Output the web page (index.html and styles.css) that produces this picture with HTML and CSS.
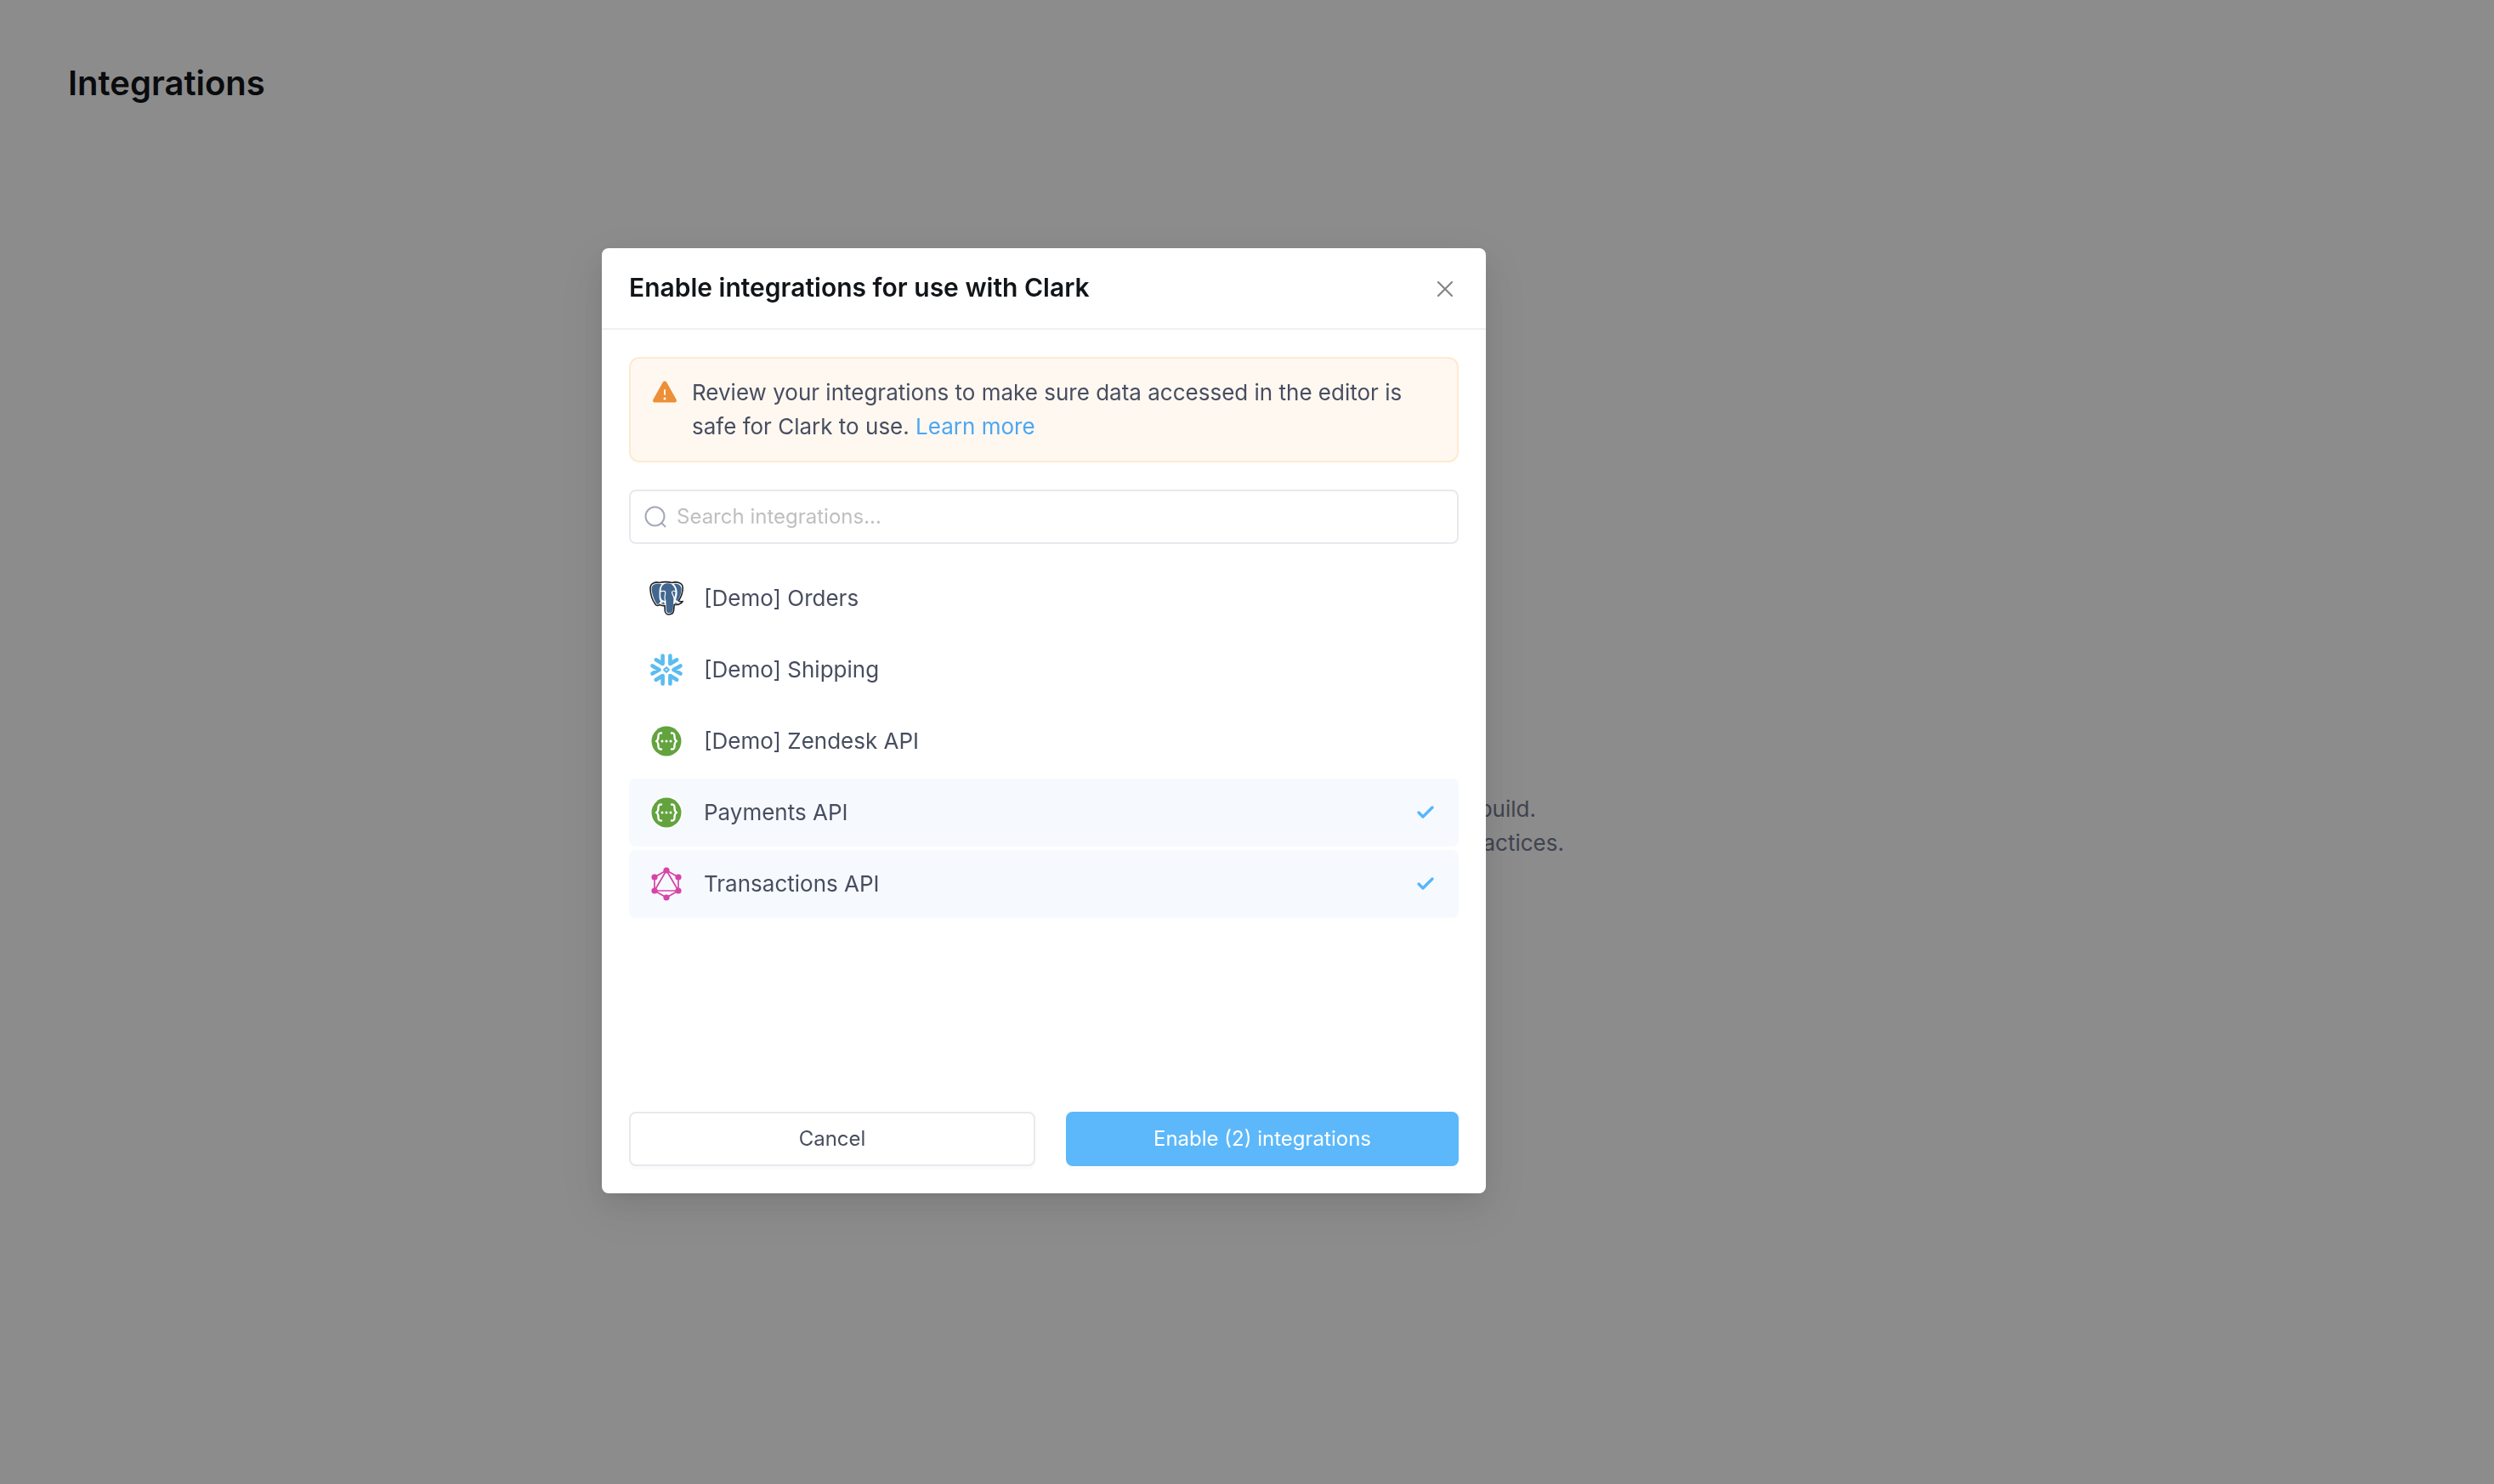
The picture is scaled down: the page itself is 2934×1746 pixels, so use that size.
FILE: index.html
```html
<!DOCTYPE html>
<html lang="en">
<head>
    <meta charset="UTF-8">
    <meta name="viewport" content="width=device-width, initial-scale=1.0">
    <title>Integrations</title>
    <link rel="stylesheet" href="styles.css">
</head>
<body>
    <main class="page">
        <h1>Integrations</h1>
        <p class="empty-state">
            <span class="line line-short">build.</span>
            <span class="line line-long">practices.</span>
        </p>
    </main>

    <div class="overlay">
        <div class="modal" role="dialog" aria-modal="true" aria-labelledby="modalTitle">
            <header class="modal-header">
                <h2 id="modalTitle">Enable integrations for use with Clark</h2>
                <button type="button" class="close" aria-label="Close">
                    <svg width="20" height="20" viewBox="0 0 20 20" fill="none" stroke="#858585" stroke-width="2.2" stroke-linecap="round">
                        <path d="M2 2l16 16M18 2L2 18"/>
                    </svg>
                </button>
            </header>

            <form class="modal-body">
                <div class="alert">
                    <svg class="alert-icon" width="28" height="28" viewBox="0 0 28 28">
                        <path d="M14 1.500c1 0 1.900.500 2.400 1.400l11.200 20c.900 1.700 0 3.600-1.900 3.600H2.300c-1.900 0-2.800-1.900-1.900-3.600l11.200-20C12.100 2 13 1.500 14 1.500z" fill="#ed8f37"/>
                        <path d="M14 12v5" stroke="#fff8f1" stroke-width="2" stroke-linecap="round"/>
                        <circle cx="14" cy="22" r="1.500" fill="#fff8f1"/>
                    </svg>
                    <p>Review your integrations to make sure data accessed in the editor is safe for Clark to use. <a href="#learn-more">Learn more</a></p>
                </div>

                <div class="search">
                    <svg width="26" height="26" viewBox="0 0 26 26" fill="none" stroke="#a4a9b8" stroke-width="2" stroke-linecap="round">
                        <circle cx="12.500" cy="12.500" r="11"/>
                        <path d="M20.500 20.500l4 4"/>
                    </svg>
                    <input type="text" aria-label="Search integrations" placeholder="Search integrations...">
                </div>

                <ul class="integrations">
                    <li>
                        <button type="button" class="integration">
                            <svg class="logo" viewBox="0 0 40 40" stroke-linejoin="round" stroke-linecap="round">
                                <path d="M12 1.500C6 0 .5 3 1 9c.3 6 3 14 6 18 1.500 2 3.500 2 5 .3 1.500 1.200 3.500 1.500 6 1.200l.3 6.500c.5 3.500 3 4.300 5.700 3.800 3-.5 4.300-2.300 4.600-5l.6-6.500c3.500.8 8-.5 10-3.800-2 .4-4 .2-5-.7 3-4 5.500-11 5-16C38.500 1.500 32 0 26.500 1.500 22 .5 16 .5 12 1.500z" fill="#fff" stroke="#222" stroke-width="1.600"/>
                                <g fill="#41678f">
                                    <path d="M12 3C7 1.800 2.300 4 2.600 9c.3 5 2.800 13 5.500 17 1 1.300 2 1.300 3 .2l2-2.700c-1.500-2-1.600-4-1.500-7 .2-5-.8-9 3-13z"/>
                                    <path d="M28.500 2.800C33 2 37.200 4 37.600 8.500c.3 5-2 11-5 14.700-1.200-.8-1.500-1.500-1.300-2.700 2-5 2.400-12-2.800-17.700z"/>
                                    <path d="M14 8c1-4 4-5.700 8-5.700 5 0 8.500 5 8.500 10 0 5.700-2.200 7-2.300 12.700l-.5 8c-.3 2.800-1.300 4-3.800 4.300-2.300.3-3.800-.7-4.100-3.300-.3-3.500 0-6.500-.5-11-3 0-5.300-1-5.800-3.500C13 16 13 12 14 8z"/>
                                    <path d="M13.500 25.800l3.500-1.500 1 2.500c-1.500.3-3.200 0-4.500-1zM30 25l1.500.2 3 .8c-1.500.7-3 .8-4.500.6z"/>
                                </g>
                                <path d="M13 12c2-1 5-.8 5.500 0 .6 3-.4 5-.5 7.500 0 1.500 1 2.500.7 4.500M31 12c-2-1-4-.5-4.500.5 0 3 2.500 5 2.500 8" fill="none" stroke="#fff" stroke-width="1.200"/>
                            </svg>
                            <span class="name">[Demo] Orders</span>
                        </button>
                    </li>
                    <li>
                        <button type="button" class="integration">
                            <svg class="logo" viewBox="0 0 40 40" fill="none" stroke="#5bbcf0" stroke-width="4.600" stroke-linecap="round" stroke-linejoin="round">
                                <path d="M15.600 3.500V13L7.800 8.300M24.400 3.500V13l7.800-4.700"/>
                                <path d="M15.600 36.500V27l-7.800 4.700M24.400 36.500V27l7.800 4.700"/>
                                <path d="M3.500 15.500l8 4.500-8 4.500M36.500 15.500l-8 4.500 8 4.500"/>
                                <path d="M20 17.200l2.800 2.800-2.800 2.800-2.800-2.800z" stroke-width="2.200"/>
                            </svg>
                            <span class="name">[Demo] Shipping</span>
                        </button>
                    </li>
                    <li>
                        <button type="button" class="integration">
                            <svg class="logo" viewBox="0 0 40 40">
                                <circle cx="20" cy="20" r="19.500" fill="#fff"/>
                                <circle cx="20" cy="20" r="17.500" fill="#62a33e"/>
                                <g fill="none" stroke="#fff" stroke-width="2.400" stroke-linecap="round" stroke-linejoin="round">
                                    <path d="M14 10.500c-3 0-3.500 1-3.500 3.500 0 3.500-.200 5-2.500 6 2.300 1 2.500 2.500 2.500 6 0 2.500.500 3.500 3.500 3.500"/>
                                    <path d="M26 10.500c3 0 3.500 1 3.500 3.500 0 3.500.200 5 2.500 6-2.300 1-2.500 2.500-2.500 6 0 2.500-.500 3.500-3.500 3.500"/>
                                </g>
                                <g fill="#fff"><circle cx="15" cy="20" r="1.500"/><circle cx="20" cy="20" r="1.500"/><circle cx="25" cy="20" r="1.500"/></g>
                            </svg>
                            <span class="name">[Demo] Zendesk API</span>
                        </button>
                    </li>
                    <li>
                        <button type="button" class="integration selected" aria-pressed="true">
                            <svg class="logo" viewBox="0 0 40 40">
                                <circle cx="20" cy="20" r="19.500" fill="#fff"/>
                                <circle cx="20" cy="20" r="17.500" fill="#62a33e"/>
                                <g fill="none" stroke="#fff" stroke-width="2.400" stroke-linecap="round" stroke-linejoin="round">
                                    <path d="M14 10.500c-3 0-3.500 1-3.500 3.500 0 3.500-.200 5-2.500 6 2.300 1 2.500 2.500 2.500 6 0 2.500.500 3.500 3.500 3.500"/>
                                    <path d="M26 10.500c3 0 3.500 1 3.500 3.500 0 3.500.200 5 2.500 6-2.300 1-2.500 2.500-2.500 6 0 2.500-.500 3.500-3.500 3.500"/>
                                </g>
                                <g fill="#fff"><circle cx="15" cy="20" r="1.500"/><circle cx="20" cy="20" r="1.500"/><circle cx="25" cy="20" r="1.500"/></g>
                            </svg>
                            <span class="name">Payments API</span>
                            <svg class="check" width="24" height="24" viewBox="0 0 24 24" fill="none" stroke="#57b6fa" stroke-width="3.400" stroke-linecap="round" stroke-linejoin="round">
                                <path d="M4 12l5 5L20 6"/>
                            </svg>
                        </button>
                    </li>
                    <li>
                        <button type="button" class="integration selected" aria-pressed="true">
                            <svg class="logo" viewBox="0 0 40 40">
                                <path d="M20 4l14 8v16l-14 8-14-8V12zM20 4L6 28h28z" fill="none" stroke="#d843a8" stroke-width="1.700"/>
                                <g fill="#d843a8">
                                    <circle cx="20" cy="4" r="3.600"/><circle cx="34" cy="12" r="3.600"/><circle cx="34" cy="28" r="3.600"/>
                                    <circle cx="20" cy="36" r="3.600"/><circle cx="6" cy="28" r="3.600"/><circle cx="6" cy="12" r="3.600"/>
                                </g>
                            </svg>
                            <span class="name">Transactions API</span>
                            <svg class="check" width="24" height="24" viewBox="0 0 24 24" fill="none" stroke="#57b6fa" stroke-width="3.400" stroke-linecap="round" stroke-linejoin="round">
                                <path d="M4 12l5 5L20 6"/>
                            </svg>
                        </button>
                    </li>
                </ul>

                <footer class="modal-footer">
                    <button type="button" class="btn">Cancel</button>
                    <button type="submit" class="btn btn-primary">Enable (2) integrations</button>
                </footer>
            </form>
        </div>
    </div>
</body>
</html>
```
FILE: styles.css
```css
* {
    margin: 0;
    padding: 0;
    box-sizing: border-box;
}

body {
    font-family: Inter, 'Liberation Sans', sans-serif;
    font-size: 26px;
    line-height: 40px;
    color: #484e60;
    background: #fff;
}

button, input {
    font: inherit;
    color: inherit;
}

button {
    border: none;
    background: none;
    cursor: pointer;
}

svg {
    display: block;
    flex: none;
    overflow: visible;
}

.page {
    min-height: 100vh;
    padding: 72px 80px;
}

.page h1 {
    font-size: 40px;
    line-height: 52px;
    font-weight: 600;
    color: #121518;
}

.empty-state {
    margin-top: 808px;
    color: #747a90;
}

.line {
    display: block;
    margin: 0 auto;
    text-align: right;
}

.line-short {
    width: 680px;
}

.line-long {
    width: 746px;
}

.overlay {
    position: fixed;
    inset: 0;
    padding: 292px 478px 32px 0;
    background: rgba(0, 0, 0, 0.45);
    overflow: auto;
}

.modal {
    max-width: 1040px;
    margin: 0 auto;
    background: #fff;
    border-radius: 8px;
    box-shadow: 0 6px 12px -8px rgba(0, 0, 0, 0.12), 0 12px 32px rgba(0, 0, 0, 0.08), 0 18px 56px 16px rgba(0, 0, 0, 0.05);
}

.modal-header {
    display: flex;
    align-items: flex-start;
    justify-content: space-between;
    padding: 24px 32px;
    border-bottom: 2px solid #f0f0f0;
}

.modal-header h2 {
    font-size: 30px;
    line-height: 44px;
    font-weight: 600;
    color: #121518;
}

.close {
    padding: 14px 6px 12px;
}

.modal-body {
    padding: 32px;
}

.alert {
    display: flex;
    gap: 18px;
    padding: 20px 26px;
    background: #fff8f1;
    border: 2px solid #fcebd0;
    border-radius: 12px;
}

.alert-icon {
    margin-top: 5px;
}

.alert a {
    color: #4ba7f3;
    text-decoration: none;
}

.search {
    display: flex;
    align-items: center;
    gap: 12px;
    height: 64px;
    margin-top: 32px;
    padding: 0 16px;
    border: 2px solid #e8e9ee;
    border-radius: 8px;
}

.search input {
    flex: 1;
    border: none;
    outline: none;
    background: none;
    font-size: 24px;
}

.search input::placeholder {
    color: #bfbfbf;
}

.integrations {
    display: flex;
    flex-direction: column;
    gap: 4px;
    min-height: 644px;
    padding-top: 24px;
    list-style: none;
}

.integration {
    display: flex;
    align-items: center;
    gap: 24px;
    width: 100%;
    height: 80px;
    padding: 0 27px 0 24px;
    border-radius: 8px;
    text-align: left;
}

.integration.selected {
    background: #f6faff;
}

.logo {
    width: 40px;
    height: 40px;
}

.name {
    flex: 1;
}

.modal-footer {
    display: grid;
    grid-template-columns: 478fr 462fr;
    gap: 36px;
    margin-top: 24px;
}

.btn {
    height: 64px;
    border: 2px solid #e8e9ee;
    border-radius: 8px;
    background: #fff;
    box-shadow: 0 4px 0 rgba(0, 0, 0, 0.016);
    font-size: 24px;
}

.btn-primary {
    border-color: #5cb8fa;
    background: #5cb8fa;
    color: #fff;
}
```
